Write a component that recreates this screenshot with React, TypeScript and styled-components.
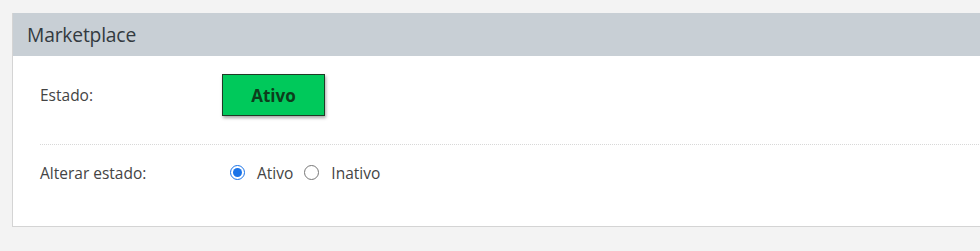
import React, { useState } from 'react'
import styled, { createGlobalStyle } from 'styled-components'

const GlobalStyle = createGlobalStyle`
  html, body {
    margin: 0;
    padding: 0;
    background-color: #f3f3f3;
    font-family: 'Open Sans', 'Liberation Sans', sans-serif;
    overflow: hidden;
  }
`

const Page = styled.div`
  padding: 13px 0 0 12px;
  width: 980px;
  box-sizing: border-box;
`

const Panel = styled.section`
  background-color: #ffffff;
  border: 1px solid #d4d4d4;
  border-right: none;
  border-top: none;
  width: 1000px;
`

const PanelHeader = styled.div`
  background-color: #c8cfd5;
  height: 43px;
  display: flex;
  align-items: center;
  padding-left: 14px;
`

const PanelTitle = styled.h2`
  margin: 0;
  font-size: 19.3px;
  font-weight: 400;
  color: #333a40;
  letter-spacing: -0.2px;
`

const PanelBody = styled.div`
  padding: 17px 0 32px 27px;
`

const Row = styled.div<{ $divider?: boolean }>`
  display: grid;
  grid-template-columns: 182px 1fr;
  align-items: center;
  min-height: ${(p) => (p.$divider ? '43px' : '44px')};
  border-top: ${(p) => (p.$divider ? '1px dotted #d8d8d8' : 'none')};
  padding: ${(p) => (p.$divider ? '6px 0 0' : '0 0 27px')};
`

const Label = styled.span`
  font-size: 15.5px;
  color: #444;
`

const StatusBadge = styled.div`
  width: 101px;
  height: 40px;
  box-sizing: content-box;
  background-color: #00c95b;
  border: 1px solid #1f3a26;
  box-shadow: 1px 2px 3px rgba(0, 0, 0, 0.35);
  display: flex;
  align-items: center;
  justify-content: center;
  font-size: 17px;
  font-weight: 700;
  color: #0d3d1c;
`

const RadioGroup = styled.div`
  display: flex;
  align-items: center;
  padding-left: 8px;
`

const RadioLabel = styled.label`
  display: inline-flex;
  align-items: center;
  font-size: 15.5px;
  color: #444;
  margin-right: 11px;
  cursor: pointer;
`

const RadioInput = styled.input`
  width: 15px;
  height: 15px;
  margin: 0 12px 0 0;
  accent-color: #1a73e8;
`

export default function App() {
  const [estado, setEstado] = useState('ativo')

  return (
    <>
      <GlobalStyle />
      <Page>
        <Panel>
          <PanelHeader>
            <PanelTitle>Marketplace</PanelTitle>
          </PanelHeader>
          <PanelBody>
            <Row>
              <Label>Estado:</Label>
              <StatusBadge>Ativo</StatusBadge>
            </Row>
            <Row $divider>
              <Label>Alterar estado:</Label>
              <RadioGroup>
                <RadioLabel>
                  <RadioInput
                    type="radio"
                    name="estado"
                    checked={estado === 'ativo'}
                    onChange={() => setEstado('ativo')}
                  />
                  Ativo
                </RadioLabel>
                <RadioLabel>
                  <RadioInput
                    type="radio"
                    name="estado"
                    checked={estado === 'inativo'}
                    onChange={() => setEstado('inativo')}
                  />
                  Inativo
                </RadioLabel>
              </RadioGroup>
            </Row>
          </PanelBody>
        </Panel>
      </Page>
    </>
  )
}
